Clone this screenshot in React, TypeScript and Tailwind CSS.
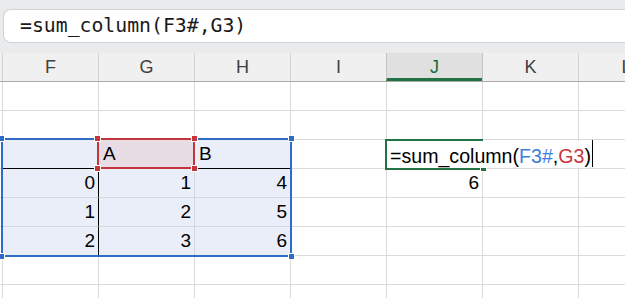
import React from "react";

const COLS = ["F", "G", "H", "I", "J", "K", "L"];
const TBL = "bg-[#eaeef8]";

type CellSpec = { text?: string; right?: boolean; cls?: string };

function Row({ cells }: { cells: CellSpec[] }) {
  return (
    <div className="flex h-[29px]">
      <div className="w-[2px] shrink-0 border-b border-[#dadada]" />
      {COLS.map((c, i) => {
        const s = cells[i] || {};
        return (
          <div
            key={c}
            className={
              "w-[96px] shrink-0 border-l border-b border-[#dadada] flex items-end pb-[3px] text-[19px] leading-[22px] text-black " +
              (s.right ? "justify-end pr-[3px] " : "justify-start pl-[4px] ") +
              (s.cls || "")
            }
          >
            {s.text}
          </div>
        );
      })}
    </div>
  );
}

function Handles({ color }: { color: string }) {
  const base = "absolute w-[7px] h-[7px] border border-white " + color;
  return (
    <>
      <div className={base + " -left-[5px] -top-[5px]"} />
      <div className={base + " -right-[5px] -top-[5px]"} />
      <div className={base + " -left-[5px] -bottom-[5px]"} />
      <div className={base + " -right-[5px] -bottom-[5px]"} />
    </>
  );
}

export default function App() {
  const empty: CellSpec[] = [];
  return (
    <div
      className="relative w-[625px] h-[298px] overflow-hidden bg-white"
      style={{ fontFamily: '"Liberation Sans", Arial, sans-serif' }}
    >
      {/* formula bar area */}
      <div className="h-[53px] bg-[#e9ebec] pt-[9px] pl-[3px]">
        <div
          className="h-[34px] bg-white border border-r-0 border-[#d0d2d4] rounded-l-[8px] flex items-center pl-[16px] text-[19.8px] text-[#1a1a1a]"
          style={{ fontFamily: '"DejaVu Sans Mono", "Liberation Mono", monospace' }}
        >
          =sum_column(F3#,G3)
        </div>
      </div>

      {/* column headers */}
      <div className="flex h-[29px] bg-[#f0f0f0] border-b border-[#ababab]">
        <div className="w-[2px] shrink-0" />
        {COLS.map((c) => (
          <div
            key={c}
            className={
              "w-[96px] shrink-0 border-l border-[#d4d4d4] flex items-center justify-center text-[18px] " +
              (c === "J"
                ? "bg-[#e0e0e0] text-[#1d6b3c] border-b-[3px] border-b-[#217346] pt-[3px] border-l-[#c4c4c4]"
                : "text-[#404040]") +
              (c === "K" ? " border-l-[#c4c4c4]" : "")
            }
          >
            {c}
          </div>
        ))}
      </div>

      {/* grid rows */}
      <Row cells={empty} />
      <Row cells={empty} />
      <Row
        cells={[
          { cls: TBL + " border-b-black" },
          { text: "A", cls: "bg-[#e8dce5] border-b-black" },
          { text: "B", cls: TBL + " border-b-black" },
        ]}
      />
      <Row
        cells={[
          { text: "0", right: true, cls: TBL + " border-b-[#d3d6de]" },
          { text: "1", right: true, cls: TBL + " border-l-black border-b-[#d3d6de]" },
          { text: "4", right: true, cls: TBL + " border-l-[#d3d6de] border-b-[#d3d6de]" },
          {},
          { text: "6", right: true },
        ]}
      />
      <Row
        cells={[
          { text: "1", right: true, cls: TBL + " border-b-[#d3d6de]" },
          { text: "2", right: true, cls: TBL + " border-l-black border-b-[#d3d6de]" },
          { text: "5", right: true, cls: TBL + " border-l-[#d3d6de] border-b-[#d3d6de]" },
        ]}
      />
      <Row
        cells={[
          { text: "2", right: true, cls: TBL },
          { text: "3", right: true, cls: TBL + " border-l-black" },
          { text: "6", right: true, cls: TBL + " border-l-[#d3d6de]" },
        ]}
      />
      <Row cells={empty} />
      <Row cells={empty} />

      {/* blue table range */}
      <div className="absolute left-[1px] top-[138px] w-[291px] h-[119px] border-2 border-[#2f6cc6]">
        <Handles color="bg-[#2f6cc6]" />
      </div>

      {/* red reference box */}
      <div className="absolute left-[97px] top-[138px] w-[98px] h-[31px] border-2 border-[#c4363c]">
        <Handles color="bg-[#c4363c]" />
      </div>

      {/* active editing cell */}
      <div className="absolute left-[385px] top-[139px] w-[98px] h-[31px] border-2 border-r-0 border-[#217346]">
        <div className="absolute -right-[4px] -bottom-[4px] w-[7px] h-[5px] bg-[#217346] border border-white" />
      </div>
      <div className="absolute left-[387px] top-[141px] h-[27px] w-[210px] bg-white flex items-end pb-[1px] pl-[3px] text-[19.6px] leading-[22px] text-black">
        <span>=sum_column(</span>
        <span className="text-[#3d7ddb]">F3#</span>
        <span>,</span>
        <span className="text-[#cc3340]">G3</span>
        <span>)</span>
        <span className="inline-block w-[1px] h-[27px] bg-black ml-[1px] self-end" />
      </div>
    </div>
  );
}
